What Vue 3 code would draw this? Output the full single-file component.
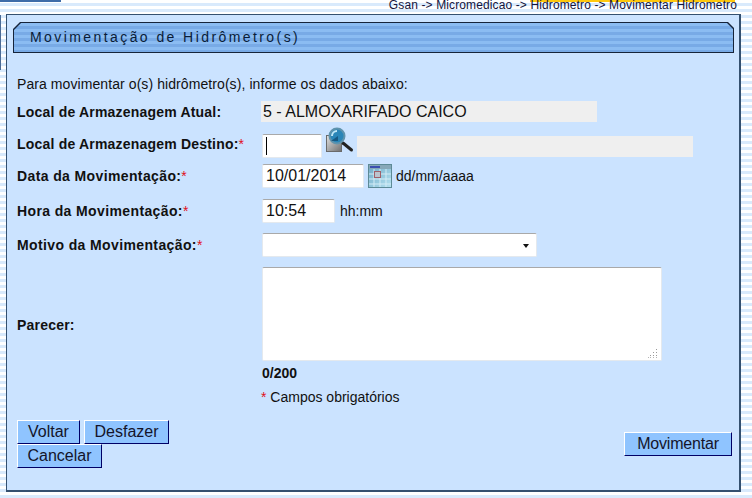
<template>
  <div class="page">
    <div class="top-left"></div>
    <div class="side-mark"></div>
    <div class="crumb-row">
      <span class="crumb">{{ crumb }}</span>
    </div>
    <div class="panel">
      <div class="title-outer">
        <div class="title-bar">Movimentação de Hidrômetro(s)</div>
      </div>
      <p class="intro">Para movimentar o(s) hidrômetro(s), informe os dados abaixo:</p>

      <div class="row row-atual">
        <label>Local de Armazenagem Atual:</label>
        <div class="readonly wide">5 - ALMOXARIFADO CAICO</div>
      </div>

      <div class="row row-destino">
        <label>Local de Armazenagem Destino:<span class="req">*</span></label>
        <span class="caret-wrap">
          <input class="field w-dest" type="text" />
          <i class="caret"></i>
        </span>
        <svg class="lupa" width="28" height="26" viewBox="0 0 28 26">
          <defs>
            <linearGradient id="doc" x1="0" y1="0" x2="1" y2="1">
              <stop offset="0" stop-color="#e2e2e2" />
              <stop offset="1" stop-color="#6f6f6f" />
            </linearGradient>
          </defs>
          <rect x="0.5" y="8.5" width="15" height="16" fill="url(#doc)" stroke="#6a6a6a" />
          <path d="M17 16 L25.5 23" stroke="#222" stroke-width="3" stroke-linecap="round" />
          <circle cx="11" cy="9" r="7.5" fill="#2a86b8" stroke="#5f93ad" stroke-width="2" />
          <path d="M6 9a5 5 0 0 1 5-5" stroke="#bfe6f6" stroke-width="2" fill="none" />
          <path d="M5 14h7V9z" fill="#114a70" opacity="0.75" />
        </svg>
        <div class="readonly dest-name"></div>
      </div>

      <div class="row row-data">
        <label>Data da Movimentação:<span class="req">*</span></label>
        <input class="field w-data" type="text" value="10/01/2014" />
        <svg class="cal" width="24" height="24" viewBox="0 0 24 24">
          <defs>
            <linearGradient id="calbg" x1="0" y1="0" x2="1" y2="1">
              <stop offset="0" stop-color="#6fa9c6" />
              <stop offset="1" stop-color="#b5e2f0" />
            </linearGradient>
          </defs>
          <rect x="0.5" y="0.5" width="23" height="23" fill="url(#calbg)" stroke="#5d8a96" />
          <rect x="1" y="1" width="22" height="4" fill="#86a8b8" />
          <rect x="2" y="2" width="10" height="2" fill="#3d4fb0" />
          <path d="M1 10h22M1 15h22M1 20h22M6 5v18M12 5v18M18 5v18" stroke="#d4ecf6" stroke-width="1" />
          <rect x="6.5" y="7.5" width="6" height="6" fill="#bcc4ce" stroke="#a0606a" />
        </svg>
        <span class="hint">dd/mm/aaaa</span>
      </div>

      <div class="row row-hora">
        <label>Hora da Movimentação:<span class="req">*</span></label>
        <input class="field w-hora" type="text" value="10:54" />
        <span class="hint hint-hora">hh:mm</span>
      </div>

      <div class="row row-motivo">
        <label>Motivo da Movimentação:<span class="req">*</span></label>
        <span class="select-wrap">
          <select class="field w-motivo"><option></option></select>
        </span>
      </div>

      <div class="row row-parecer">
        <label>Parecer:</label>
        <span class="area-wrap">
          <textarea class="field w-parecer"></textarea>
          <svg class="grip" width="9" height="9" viewBox="0 0 9 9">
            <path d="M8 0h1v1H8zM8 3h1v1H8zM5 3h1v1H5zM8 6h1v1H8zM5 6h1v1H5zM2 6h1v1H2z" fill="#9a9a9a" />
            <path d="M8 8h1v1H8zM5 8h1v1H5zM2 8h1v1H2zM0 8h1v1H0z" fill="#b5b5b5" />
          </svg>
        </span>
      </div>

      <div class="counter">0/200</div>
      <div class="required-note"><span class="req">*</span> Campos obrigatórios</div>

      <div class="actions">
        <div class="actions-left">
          <button class="btn b-voltar">Voltar</button>
          <button class="btn b-desfazer">Desfazer</button>
          <button class="btn b-cancelar">Cancelar</button>
        </div>
        <button class="btn b-mov">Movimentar</button>
      </div>
    </div>
  </div>
</template>

<script setup>
const crumb = 'Gsan -> Micromedicao -> Hidrometro -> Movimentar Hidrometro'
</script>

<style>
html, body { margin: 0; padding: 0; overflow: hidden; }
</style>

<style scoped>
.page {
  position: relative;
  width: 752px;
  height: 498px;
  overflow: hidden;
  box-sizing: border-box;
  padding-top: 14px;
  font-family: "Liberation Sans", Arial, sans-serif;
  color: #111;
  background: repeating-linear-gradient(to bottom, #fff 0, #fff 3px, #d9eafc 3px, #d9eafc 6px);
}
.top-left {
  position: absolute;
  left: 0;
  top: 0;
  width: 61px;
  height: 2px;
  background: #3f6ca8;
}
.side-mark {
  position: absolute;
  left: 0;
  top: 15px;
  width: 1px;
  height: 55px;
  background: #4a6a94;
}
.crumb-row {
  position: absolute;
  top: 0;
  left: 530px;
  width: 205px;
  height: 2px;
  background: #ffc90e;
}
.crumb {
  position: absolute;
  right: -2px;
  top: -2px;
  white-space: nowrap;
  font-size: 12px;
  line-height: 15px;
  letter-spacing: 0.12px;
  color: #14143c;
}
.panel {
  box-sizing: border-box;
  width: 735px;
  height: 478px;
  margin-left: 6px;
  padding: 7px 5px 0 6px;
  background: #cbe3ff;
  border: 1px solid #34506f;
  border-width: 1px 2px 2px 1px;
}
.title-outer {
  height: 31px;
  padding: 1px;
  box-sizing: border-box;
  background: #16243a;
  clip-path: polygon(7px 0, calc(100% - 6px) 0, 100% 6px, 100% 100%, 0 100%, 0 7px);
}
.title-bar {
  height: 100%;
  box-sizing: border-box;
  padding-left: 16px;
  font-size: 14px;
  line-height: 28px;
  letter-spacing: 2.42px;
  color: #0a1c38;
  background: repeating-linear-gradient(to bottom, #8bbcf2 0, #8bbcf2 3px, #78aae6 3px, #78aae6 6px);
  clip-path: polygon(7px 0, calc(100% - 6px) 0, 100% 6px, 100% 100%, 0 100%, 0 7px);
}
.intro {
  margin: 23px 0 0 4px;
  height: 16px;
  font-size: 14px;
  line-height: 16px;
  letter-spacing: 0.08px;
}
.row {
  display: flex;
  align-items: center;
  position: relative;
}
.row label {
  flex: 0 0 245px;
  margin-left: 4px;
  font-weight: 700;
  font-size: 14px;
  line-height: 16px;
  letter-spacing: 0.2px;
  color: #111;
}
.row-data label,
.row-hora label,
.row-motivo label { letter-spacing: 0.38px; }
.row-destino label { margin-top: -4px; }
.row-parecer label { margin-top: 21px; }
.req { color: #e0101a; font-weight: 400; }
.row-atual { height: 21px; margin-top: 9px; }
.row-destino { height: 24px; margin-top: 12px; }
.row-data { height: 24px; margin-top: 6px; }
.row-hora { height: 24px; margin-top: 11px; }
.row-motivo { height: 24px; margin-top: 10px; }
.row-parecer { height: 94px; margin-top: 10px; }
.readonly {
  box-sizing: border-box;
  height: 21px;
  background: #efefef;
  font-size: 16px;
  line-height: 21px;
  color: #111;
  padding-left: 2px;
}
.wide { width: 336px; margin-left: -1px; }
.dest-name { width: 336px; margin-left: 3px; }
.field {
  box-sizing: border-box;
  display: block;
  height: 24px;
  margin: 0;
  padding: 1px 3px;
  font-family: "Liberation Sans", Arial, sans-serif;
  font-size: 16px;
  color: #111;
  background: #fff;
  border: 1px solid #e4e9ee;
  border-top-color: #a9a9a9;
  border-radius: 2px;
  outline: none;
}
.caret-wrap,
.select-wrap,
.area-wrap { position: relative; display: block; }
.caret {
  position: absolute;
  left: 4px;
  top: 3px;
  width: 1px;
  height: 18px;
  background: #000;
}
.select-wrap::after {
  content: "";
  position: absolute;
  right: 8px;
  top: 11px;
  border-style: solid;
  border-width: 4px 3.5px 0;
  border-color: #111 transparent transparent;
  pointer-events: none;
}
.w-dest { width: 60px; }
.w-data { width: 102px; }
.w-hora { width: 73px; }
.w-motivo { width: 275px; appearance: none; }
.w-parecer { width: 400px; height: 94px; resize: none; }
.grip { position: absolute; right: 5px; bottom: 3px; }
.lupa { margin: -13px 0 0 4px; flex: none; }
.cal { margin-left: 4px; flex: none; }
.hint { font-size: 14px; margin-left: 4px; color: #111; }
.hint-hora { margin-left: 5px; }
.counter {
  margin: 4px 0 0 249px;
  font-size: 14px;
  line-height: 16px;
  font-weight: 700;
}
.required-note {
  margin: 8px 0 0 248px;
  font-size: 14px;
  line-height: 16px;
}
.actions {
  display: flex;
  justify-content: space-between;
  align-items: center;
  margin: 15px 2px 0 4px;
}
.actions-left {
  display: flex;
  flex-wrap: wrap;
  width: 160px;
  column-gap: 4px;
}
.btn {
  box-sizing: border-box;
  height: 24px;
  padding: 0;
  font-family: "Liberation Sans", Arial, sans-serif;
  font-size: 16px;
  line-height: 20px;
  color: #14142a;
  background: #8fc4ff;
  border: 1px solid;
  border-color: #fff #000066 #000066 #fff;
  border-radius: 0;
}
.b-voltar { width: 63px; }
.b-desfazer { width: 85px; }
.b-cancelar { width: 85px; }
.b-mov { width: 108px; letter-spacing: -0.2px; }
</style>
